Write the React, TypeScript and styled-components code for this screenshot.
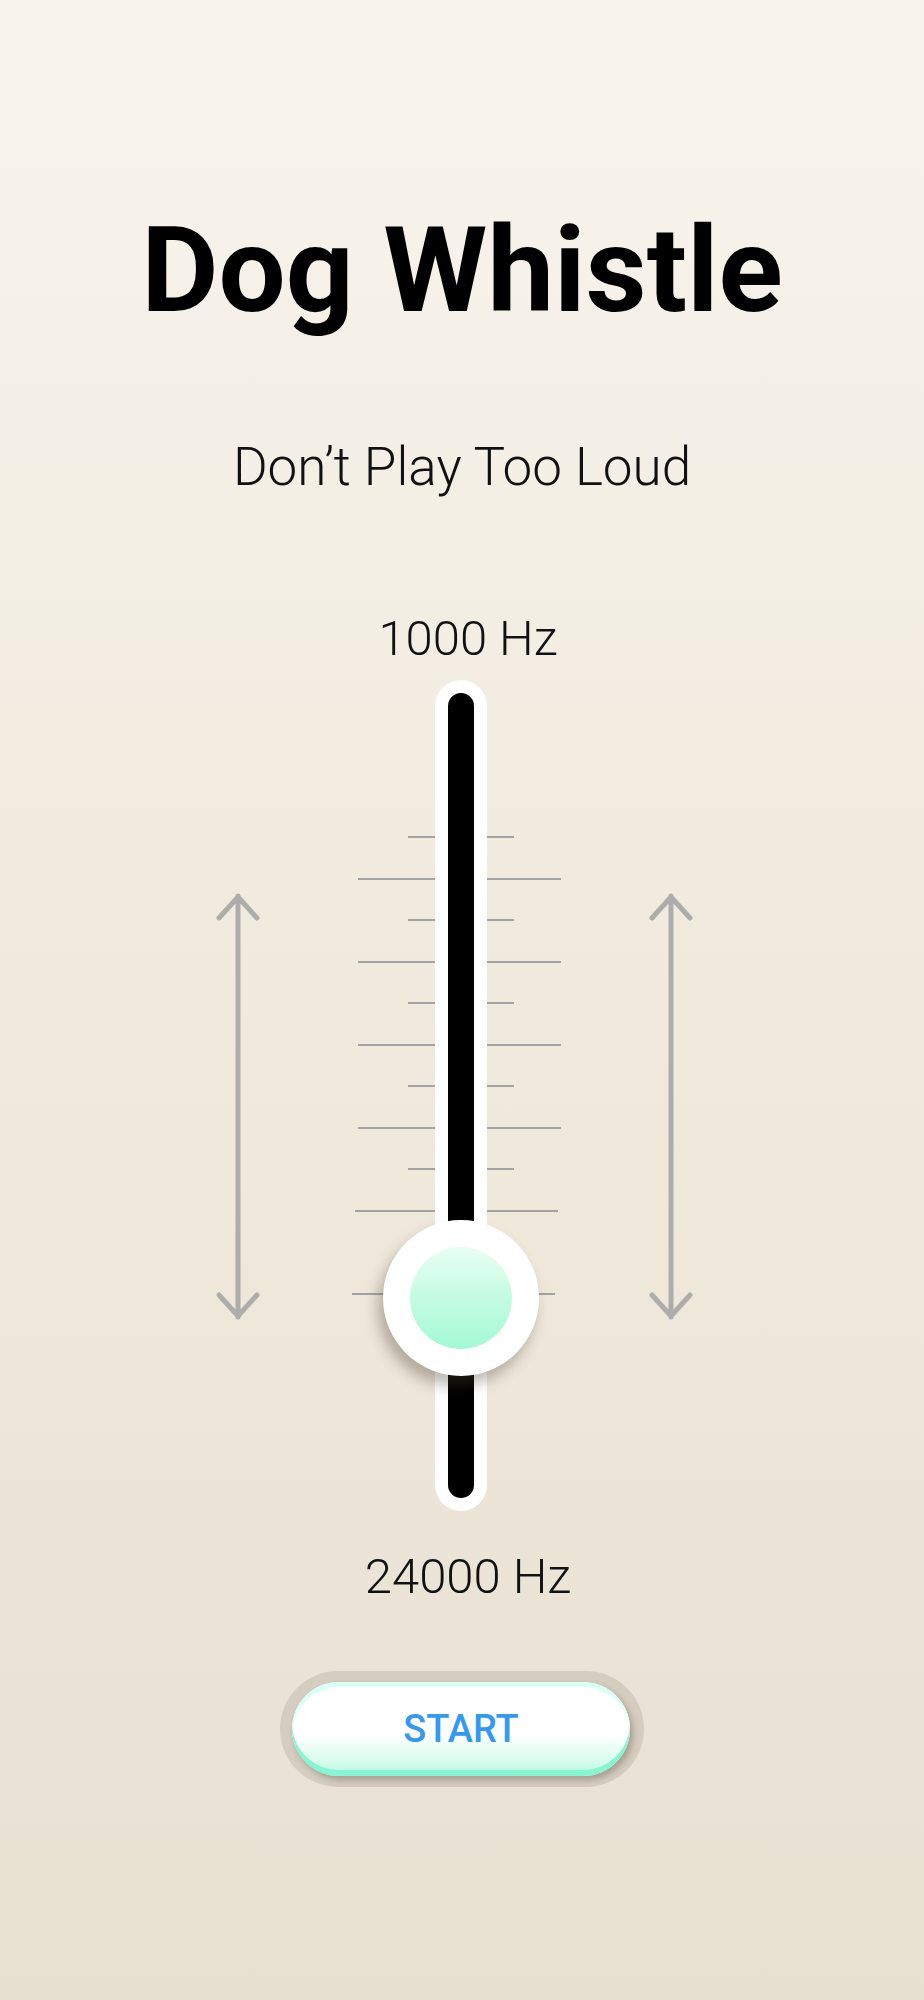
import React from "react";
import styled, { createGlobalStyle } from "styled-components";

const GlobalStyle = createGlobalStyle`
    html, body {
        margin: 0;
        padding: 0;
    }
    body {
        font-family: Roboto, "Liberation Sans", sans-serif;
    }
`;

const Page = styled.main`
    width: 924px;
    min-height: 2000px;
    box-sizing: border-box;
    padding-top: 211px;
    display: flex;
    flex-direction: column;
    align-items: center;
    background: linear-gradient(180deg, #f8f4ed 0%, #f1ebdf 45%, #e8e0d1 100%);
`;

const Title = styled.h1`
    margin: 0;
    font-size: 119px;
    line-height: 119px;
    font-weight: 700;
    color: #000;
    letter-spacing: 0;
`;

const Subtitle = styled.h2`
    margin: 111px 0 0;
    font-size: 53px;
    line-height: 53px;
    font-weight: 300;
    color: #111;
`;

const FreqLabel = styled.div<{ gapTop: number }>`
    margin-top: ${(p) => p.gapTop}px;
    font-size: 49px;
    line-height: 49px;
    font-weight: 300;
    color: #111;
    transform: translateX(6px);
`;

const SliderRow = styled.section`
    margin-top: 17px;
    width: 100%;
    display: flex;
    justify-content: center;
    align-items: flex-start;
    padding-right: 15px;
    box-sizing: border-box;
`;

const ArrowBox = styled.div<{ side: "left" | "right" }>`
    width: 46px;
    height: 431px;
    margin-top: 211px;
    margin-right: ${(p) => (p.side === "left" ? 94 : 0)}px;
    margin-left: ${(p) => (p.side === "right" ? 81 : 0)}px;
    svg {
        display: block;
    }
`;

const Scale = styled.div<{ side: "left" | "right" }>`
    width: 80px;
    display: flex;
    flex-direction: column;
    align-items: ${(p) => (p.side === "left" ? "flex-end" : "flex-start")};
`;

const Tick = styled.div<{ len: number; offset: number }>`
    width: ${(p) => p.len}px;
    height: 2px;
    margin-top: ${(p) => p.offset}px;
    background: #a3a3a1;
`;

const Track = styled.div`
    position: relative;
    width: 52px;
    height: 831px;
    box-sizing: border-box;
    padding: 13px;
    border-radius: 26px;
    background: #fff;
`;

const TrackFill = styled.div`
    width: 100%;
    height: 100%;
    border-radius: 13px;
    background: #000;
`;

const Knob = styled.div`
    position: absolute;
    left: 50%;
    top: 540px;
    width: 156px;
    height: 156px;
    margin-left: -78px;
    border-radius: 50%;
    background: #fff;
    display: flex;
    align-items: center;
    justify-content: center;
    box-shadow: -5px 10px 14px rgba(70, 60, 40, 0.35);
`;

const KnobCore = styled.div`
    width: 102px;
    height: 102px;
    border-radius: 50%;
    background: linear-gradient(180deg, #e8fff4 0%, #c4fbe2 50%, #a3f9d3 100%);
`;

const ButtonRing = styled.div`
    margin-top: 70px;
    width: 364px;
    height: 116px;
    box-sizing: border-box;
    padding: 11px 14px 11px 12px;
    border-radius: 58px;
    background: #d5cdbf;
`;

const StartButton = styled.button`
    width: 100%;
    height: 100%;
    border: none;
    border-radius: 47px;
    background: linear-gradient(180deg, #ffffff 0%, #ffffff 55%, #d6fcec 85%, #b6f9df 100%);
    box-shadow: inset 0 -6px 0 #86f5d1, inset 0 5px 2px #d8fff3, 3px 4px 6px rgba(60, 50, 30, 0.3);
    font-family: Roboto, "Liberation Sans", sans-serif;
    font-size: 38px;
    font-weight: 500;
    color: #3399f3;
    padding: 0;
    cursor: pointer;
`;

const DoubleArrow: React.FC = () => (
    <svg width="46" height="431" viewBox="0 0 46 431" fill="none">
        <path
            d="M23 5 V426 M4 27 L23 6 L42 27 M4 404 L23 425 L42 404"
            stroke="#adadab"
            strokeWidth="5"
            strokeLinecap="round"
            strokeLinejoin="round"
        />
    </svg>
);

// 12 ticks, alternating short / long, every ~41.5px; the last two long ones lean a bit left
const TICK_START = 156;
const TICK_STEP = 41.55;
const ticks = Array.from({ length: 12 }, (_, i) => {
    const y = Math.round(TICK_START + i * TICK_STEP);
    const prev = i === 0 ? 0 : Math.round(TICK_START + (i - 1) * TICK_STEP) + 2;
    return {
        long: i % 2 === 1,
        shift: i === 9 ? 3 : i === 11 ? 6 : 0,
        offset: y - prev,
    };
});

const App: React.FC = () => {
    return (
        <>
            <GlobalStyle />
            <Page>
                <Title>Dog Whistle</Title>
                <Subtitle>Don’t Play Too Loud</Subtitle>
                <FreqLabel gapTop={120}>1000 Hz</FreqLabel>
                <SliderRow>
                    <ArrowBox side="left">
                        <DoubleArrow />
                    </ArrowBox>
                    <Scale side="left">
                        {ticks.map((t, i) => (
                            <Tick key={i} offset={t.offset} len={t.long ? 77 + t.shift : 27} />
                        ))}
                    </Scale>
                    <Track>
                        <TrackFill />
                        <Knob>
                            <KnobCore />
                        </Knob>
                    </Track>
                    <Scale side="right">
                        {ticks.map((t, i) => (
                            <Tick key={i} offset={t.offset} len={t.long ? 74 - t.shift : 27} />
                        ))}
                    </Scale>
                    <ArrowBox side="right">
                        <DoubleArrow />
                    </ArrowBox>
                </SliderRow>
                <FreqLabel gapTop={41}>24000 Hz</FreqLabel>
                <ButtonRing>
                    <StartButton>START</StartButton>
                </ButtonRing>
            </Page>
        </>
    );
};

export default App;
